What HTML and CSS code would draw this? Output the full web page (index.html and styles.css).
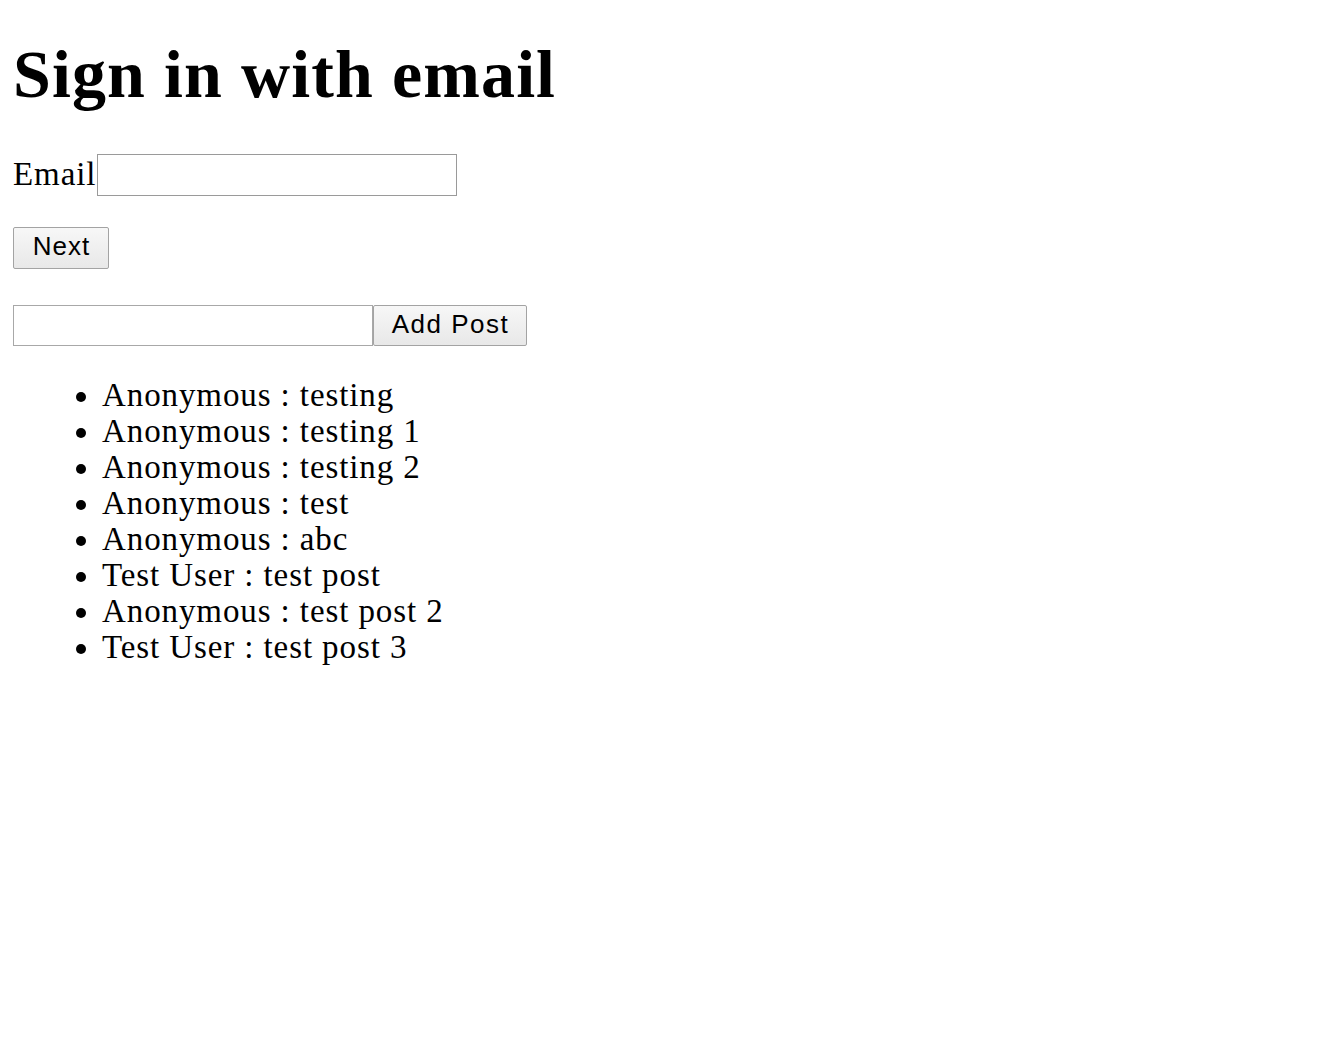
FILE: index.html
```html
<!DOCTYPE html>
<html>
<head>
<meta charset="utf-8">
<title>Sign in with email</title>
<link rel="stylesheet" href="styles.css">
</head>
<body>
<h1 class="title">Sign in with email</h1>
<div class="email-row">
  <label class="email-label" for="email">Email</label>
  <input class="field email-field" id="email" type="text">
</div>
<div class="next-row">
  <button class="btn next-btn" type="button">Next</button>
</div>
<div class="post-row">
  <input class="field post-field" type="text">
  <button class="btn add-btn" type="button">Add Post</button>
</div>
<ul class="posts">
  <li>Anonymous : testing</li>
  <li>Anonymous : testing 1</li>
  <li>Anonymous : testing 2</li>
  <li>Anonymous : test</li>
  <li>Anonymous : abc</li>
  <li>Test User : test post</li>
  <li>Anonymous : test post 2</li>
  <li>Test User : test post 3</li>
</ul>
</body>
</html>
```

FILE: styles.css
```css
html, body {
  margin: 0;
  padding: 0;
  background: #ffffff;
}
body {
  padding: 0 13px;
  font-family: "Liberation Serif", "Times New Roman", serif;
  color: #000;
}
.title {
  margin: 34px 0 0;
  font-size: 68px;
  line-height: 80px;
  font-weight: bold;
  letter-spacing: 1.1px;
}
.email-row {
  margin-top: 40px;
  display: flex;
  align-items: center;
}
.email-label {
  font-size: 33px;
  line-height: 36px;
  letter-spacing: 0.9px;
  margin-top: -3px;
  margin-right: 1px;
}
.field {
  box-sizing: border-box;
  height: 42px;
  border: 1px solid #9a9a9a;
  background: #fff;
  margin: 0;
  padding: 0 4px;
  font-family: "Liberation Sans", Arial, sans-serif;
  font-size: 22px;
}
.email-field {
  width: 360px;
}
.next-row {
  margin-top: 31px;
  display: flex;
}
.btn {
  box-sizing: border-box;
  height: 42px;
  margin: 0;
  border: 1px solid #a3a3a3;
  border-radius: 2px;
  background: linear-gradient(#f7f7f7, #e8e8e8);
  font-family: "Liberation Sans", Arial, sans-serif;
  font-size: 26px;
  color: #000;
  text-align: center;
  padding: 0 0 3px;
}
.next-btn {
  width: 96px;
  letter-spacing: 1px;
  padding-left: 1px;
}
.post-row {
  margin-top: 36px;
  display: flex;
  height: 41px;
}
.post-field {
  width: 360px;
  height: 41px;
  border-color: #a8a8a8;
}
.add-btn {
  width: 154px;
  height: 41px;
  letter-spacing: 1.5px;
  padding-left: 1px;
}
.posts {
  margin: 31px 0 0;
  padding-left: 89px;
  font-size: 33px;
  line-height: 36px;
  letter-spacing: 0.9px;
  list-style: disc;
}
.posts li::marker {
  letter-spacing: 0;
}
```
